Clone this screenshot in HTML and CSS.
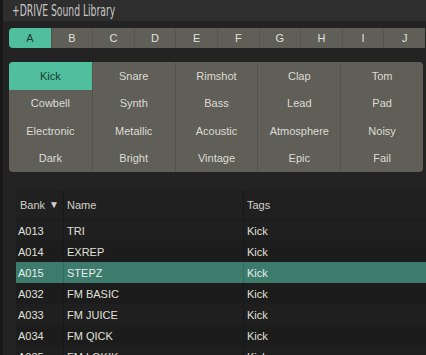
FILE: index.html
```html
<!DOCTYPE html>
<html lang="en">
<head>
    <meta charset="UTF-8">
    <title>+DRIVE Sound Library</title>
    <link rel="stylesheet" href="styles.css">
</head>
<body>
    <div class="library">
        <div class="titlebar"><span class="title">+DRIVE Sound Library</span></div>

        <div class="letters">
            <div class="letter active">A</div>
            <div class="letter">B</div>
            <div class="letter">C</div>
            <div class="letter">D</div>
            <div class="letter">E</div>
            <div class="letter">F</div>
            <div class="letter">G</div>
            <div class="letter">H</div>
            <div class="letter">I</div>
            <div class="letter">J</div>
        </div>

        <div class="tags">
            <div class="tag active">Kick</div>
            <div class="tag">Snare</div>
            <div class="tag">Rimshot</div>
            <div class="tag">Clap</div>
            <div class="tag">Tom</div>
            <div class="tag">Cowbell</div>
            <div class="tag">Synth</div>
            <div class="tag">Bass</div>
            <div class="tag">Lead</div>
            <div class="tag">Pad</div>
            <div class="tag">Electronic</div>
            <div class="tag">Metallic</div>
            <div class="tag">Acoustic</div>
            <div class="tag">Atmosphere</div>
            <div class="tag">Noisy</div>
            <div class="tag">Dark</div>
            <div class="tag">Bright</div>
            <div class="tag">Vintage</div>
            <div class="tag">Epic</div>
            <div class="tag">Fail</div>
        </div>

        <div class="table">
            <div class="row head">
                <div class="cell">Bank <span class="sort">&#9660;</span></div>
                <div class="cell">Name</div>
                <div class="cell">Tags</div>
            </div>
            <div class="row"><div class="cell">A013</div><div class="cell">TRI</div><div class="cell">Kick</div></div>
            <div class="row"><div class="cell">A014</div><div class="cell">EXREP</div><div class="cell">Kick</div></div>
            <div class="row selected"><div class="cell">A015</div><div class="cell">STEPZ</div><div class="cell">Kick</div></div>
            <div class="row"><div class="cell">A032</div><div class="cell">FM BASIC</div><div class="cell">Kick</div></div>
            <div class="row"><div class="cell">A033</div><div class="cell">FM JUICE</div><div class="cell">Kick</div></div>
            <div class="row"><div class="cell">A034</div><div class="cell">FM QICK</div><div class="cell">Kick</div></div>
            <div class="row"><div class="cell">A035</div><div class="cell">FM LOKIK</div><div class="cell">Kick</div></div>
        </div>
    </div>
</body>
</html>
```

FILE: styles.css
```css
body {
    margin: 0;
    width: 426px;
    height: 355px;
    overflow: hidden;
    background: #181818;
    font-family: 'Liberation Sans', Arial, sans-serif;
    font-size: 11px;
    color: #dcdcd6;
}

.library {
    margin-left: 3px;
    height: 355px;
    background: #232323;
}

.titlebar {
    height: 21px;
    background: #2e2e2e;
    padding-left: 9px;
    display: flex;
    align-items: center;
}

.title {
    font-family: 'DejaVu Sans Condensed', sans-serif;
    font-size: 16px;
    color: #c8c8c8;
    display: inline-block;
    transform: scaleX(0.64);
    transform-origin: left center;
    white-space: nowrap;
}

.letters {
    display: grid;
    grid-template-columns: repeat(10, 41.6px);
    height: 20px;
    margin: 7px 0 0 6px;
}

.letter {
    display: flex;
    align-items: center;
    justify-content: center;
    background: #5f5e57;
    border-left: 1px solid #55544e;
    color: #e2e2dc;
    font-size: 11px;
}

.letter:first-child {
    border-left: none;
    border-radius: 4px 0 0 4px;
}

.letter.active {
    background: #4fbf9e;
    color: #1d3b31;
}

.tags {
    display: grid;
    grid-template-columns: repeat(5, 82.8px);
    grid-template-rows: repeat(4, 27.5px);
    width: 414px;
    margin: 14px 0 0 6px;
    background: #5f5e57;
    border-radius: 4px;
    overflow: hidden;
}

.tag {
    display: flex;
    align-items: center;
    justify-content: center;
    border-left: 1px solid #54534d;
    color: #dcdcd4;
}

.tag:nth-child(5n+1) {
    border-left: none;
}

.tag.active {
    background: #4fbf9e;
    color: #1d3b31;
}

.table {
    margin: 18px 0 0 13px;
}

.row {
    display: grid;
    grid-template-columns: 47px 180px 1fr;
    height: 21px;
    background: #1f1f1f;
}

.row:nth-child(odd) {
    background: #1c1c1c;
}

.row.head {
    height: 29px;
    background: #202020;
    border-bottom: 1px solid #1a1a1a;
}

.cell {
    display: flex;
    align-items: center;
    padding-left: 3px;
    border-left: 1px solid #181818;
    color: #e0e0da;
    white-space: nowrap;
}

.cell:first-child {
    border-left: none;
    padding-left: 2px;
}

.head .cell {
    color: #d0d0ca;
}

.head .cell:first-child {
    padding-left: 4px;
}

.sort {
    font-size: 10px;
    margin-left: 4px;
}

.row.selected {
    background: #3d7b6d;
}

.row.selected .cell {
    color: #e4efea;
    border-left-color: #36685c;
}
```
